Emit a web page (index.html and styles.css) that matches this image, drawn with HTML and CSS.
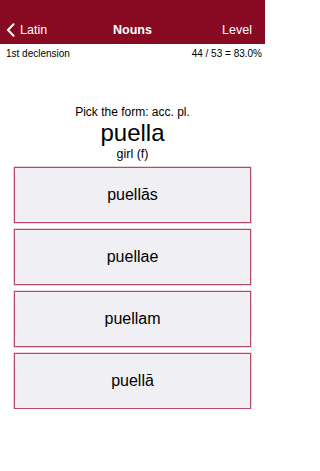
FILE: index.html
```html
<!DOCTYPE html>
<html>
<head>
<meta charset="utf-8">
<link rel="stylesheet" href="styles.css">
</head>
<body>
<div class="page">
<header class="nav">
  <div class="nav-row">
    <div class="back">
      <svg class="chev" width="9" height="14" viewBox="0 0 9 14"><path d="M7.5 1.2 L2 7 L7.5 12.8" fill="none" stroke="#fff" stroke-width="2" stroke-linecap="round" stroke-linejoin="round"/></svg>
      <span>Latin</span>
    </div>
    <div class="title">Nouns</div>
    <div class="level">Level</div>
  </div>
</header>
<div class="sub">
  <span>1st declension</span>
  <span>44 / 53 = 83.0%</span>
</div>
<main class="quiz">
  <div class="prompt">Pick the form: acc. pl.</div>
  <div class="word">puella</div>
  <div class="gloss">girl (f)</div>
  <div class="choices">
    <div class="choice">puellās</div>
    <div class="choice">puellae</div>
    <div class="choice">puellam</div>
    <div class="choice">puellā</div>
  </div>
</main>
</div>
</body>
</html>
```
FILE: styles.css
```css
html, body {
  margin: 0;
  padding: 0;
  background: #fff;
  font-family: "Liberation Sans", Arial, sans-serif;
  color: #000;
}
.page {
  width: 265px;
}
.nav {
  background: #880a22;
  height: 44px;
  padding-top: 16px;
  box-sizing: border-box;
  color: #fff;
}
.nav-row {
  height: 28px;
  display: grid;
  grid-template-columns: 1fr auto 1fr;
  align-items: center;
  font-size: 12.5px;
}
.back {
  display: flex;
  align-items: center;
  padding-left: 6px;
  gap: 5px;
}
.chev { display: block; }
.title {
  font-weight: bold;
  text-align: center;
}
.level {
  text-align: right;
  padding-right: 13px;
}
.sub {
  height: 18px;
  display: flex;
  justify-content: space-between;
  align-items: center;
  padding: 0 3px 0 6px;
  font-size: 10px;
}
.quiz {
  padding-top: 43px;
  text-align: center;
}
.prompt {
  font-size: 12px;
  line-height: 14px;
}
.word {
  font-size: 24px;
  line-height: 28px;
}
.gloss {
  font-size: 12.5px;
  line-height: 14px;
}
.choices {
  margin: 6px 14px 0;
  display: flex;
  flex-direction: column;
  gap: 6px;
}
.choice {
  height: 56px;
  box-sizing: border-box;
  background: #efeff4;
  border: 1px solid #b44a68;
  box-shadow: 0 0 0 0.5px #e8a0b4;
  display: flex;
  align-items: center;
  justify-content: center;
  font-size: 16px;
}
```
